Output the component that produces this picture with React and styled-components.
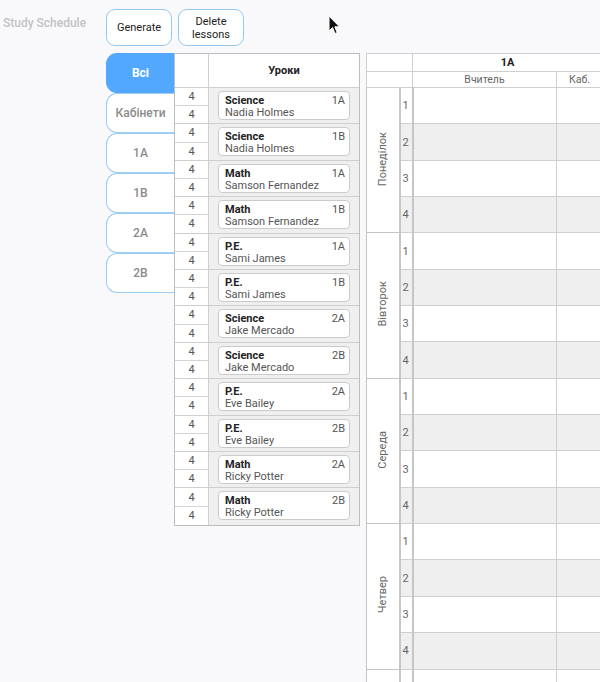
import React from "react";
import styled, { createGlobalStyle } from "styled-components";

const GlobalStyle = createGlobalStyle`
  html, body {
    margin: 0;
    padding: 0;
    background: #f9f9fb;
    font-family: Roboto, "Liberation Sans", sans-serif;
  }
`;

const lessons = [
  { subject: "Science", teacher: "Nadia Holmes", group: "1A" },
  { subject: "Science", teacher: "Nadia Holmes", group: "1B" },
  { subject: "Math", teacher: "Samson Fernandez", group: "1A" },
  { subject: "Math", teacher: "Samson Fernandez", group: "1B" },
  { subject: "P.E.", teacher: "Sami James", group: "1A" },
  { subject: "P.E.", teacher: "Sami James", group: "1B" },
  { subject: "Science", teacher: "Jake Mercado", group: "2A" },
  { subject: "Science", teacher: "Jake Mercado", group: "2B" },
  { subject: "P.E.", teacher: "Eve Bailey", group: "2A" },
  { subject: "P.E.", teacher: "Eve Bailey", group: "2B" },
  { subject: "Math", teacher: "Ricky Potter", group: "2A" },
  { subject: "Math", teacher: "Ricky Potter", group: "2B" },
];

const tabs = ["Всі", "Кабінети", "1A", "1B", "2A", "2B"];
const days = ["Понеділок", "Вівторок", "Середа", "Четвер", "П'ятниця"];

const Page = styled.div`
  position: relative;
  display: flex;
  width: 600px;
  height: 682px;
  overflow: hidden;
`;

const Brand = styled.div`
  flex: 0 0 103px;
  padding: 16px 0 0 3px;
  font-size: 12px;
  font-weight: 500;
  color: #c2c2c4;
`;

const Main = styled.div`
  display: flex;
  flex-direction: column;
  padding-top: 9px;
`;

const Toolbar = styled.div`
  display: flex;
  gap: 6px;
`;

const ActionButton = styled.button`
  width: 66px;
  height: 37px;
  padding: 0;
  background: #fff;
  border: 1px solid #92c8f2;
  border-radius: 9px;
  font-family: Roboto, "Liberation Sans", sans-serif;
  font-size: 11px;
  line-height: 13px;
  color: #222;
`;

const Workspace = styled.div`
  display: flex;
  align-items: flex-start;
  margin-top: 7px;
`;

const Tabs = styled.div`
  display: flex;
  flex-direction: column;
  width: 68px;
  flex-shrink: 0;
`;

const Tab = styled.div`
  display: flex;
  align-items: center;
  justify-content: center;
  height: 40px;
  box-sizing: border-box;
  border: 1px solid ${({ $active }) => ($active ? "#52a8ff" : "#9dcdf3")};
  border-right: none;
  border-radius: 11px 0 0 11px;
  background: ${({ $active }) => ($active ? "#52a8ff" : "#fff")};
  color: ${({ $active }) => ($active ? "#fff" : "#8c8c8c")};
  font-size: 12px;
  font-weight: ${({ $active }) => ($active ? 700 : 500)};
`;

const LessonsTable = styled.div`
  width: 186px;
  flex-shrink: 0;
  box-sizing: border-box;
  border: 1px solid #bdbdbd;
  background: #fff;
`;

const LessonsRow = styled.div`
  display: grid;
  grid-template-columns: 33px 1fr;
  height: ${({ $head }) => ($head ? "34px" : "36.4px")};
  box-sizing: border-box;
  border-bottom: 1px solid #cfcfcf;
  &:last-child {
    border-bottom: none;
  }
`;

const HeadCell = styled.div`
  display: flex;
  align-items: center;
  justify-content: center;
  border-left: ${({ $first }) => ($first ? "none" : "1px solid #cfcfcf")};
  font-size: 11px;
  font-weight: 700;
  color: #222;
`;

const Counts = styled.div`
  display: flex;
  flex-direction: column;
`;

const Count = styled.div`
  flex: 1;
  display: flex;
  align-items: center;
  justify-content: center;
  font-size: 11px;
  color: #555;
  & + & {
    border-top: 1px solid #d4d4d4;
  }
`;

const LessonSlot = styled.div`
  border-left: 1px solid #cfcfcf;
  background: #efefef;
  padding: 3px 9px 0 9px;
`;

const Card = styled.div`
  display: grid;
  grid-template-columns: 1fr auto;
  height: 29px;
  box-sizing: border-box;
  padding: 3px 4px 0 6px;
  background: #fff;
  border: 1px solid #cbcbcb;
  border-radius: 4px;
  font-size: 11px;
  line-height: 12px;
`;

const Subject = styled.span`
  font-weight: 700;
  color: #222;
`;

const Group = styled.span`
  color: #555;
  text-align: right;
`;

const Teacher = styled.span`
  grid-column: 1 / 3;
  color: #555;
`;

const Schedule = styled.table`
  margin-left: 6px;
  flex-shrink: 0;
  border-collapse: collapse;
  table-layout: fixed;
  background: #fff;
  border: 1px solid #bdbdbd;
  font-size: 11px;
  color: #555;
`;

const Th = styled.th`
  height: ${({ $h }) => $h}px;
  padding: 0;
  border: 1px solid #cfcfcf;
  font-weight: ${({ $bold }) => ($bold ? 700 : 400)};
  color: ${({ $bold }) => ($bold ? "#222" : "#666")};
  font-size: ${({ $bold }) => ($bold ? "11px" : "10.5px")};
`;

const DayCell = styled.td`
  padding: 0;
  border: 1px solid #c4c4c4;
  text-align: center;
  vertical-align: middle;
`;

const DayLabel = styled.span`
  display: inline-block;
  writing-mode: vertical-rl;
  transform: rotate(180deg);
  font-size: 11px;
  color: #666;
`;

const NumCell = styled.td`
  height: 36.35px;
  padding: 0 0 0 2px;
  box-sizing: border-box;
  border-top: 1px solid #cfcfcf;
  border-bottom: 1px solid #cfcfcf;
  border-left: 2px solid #c6c6c6;
  border-right: 2px solid #c6c6c6;
  background: ${({ $odd }) => ($odd ? "#efefef" : "#fff")};
  font-size: 11px;
  color: #666;
`;

const SlotCell = styled.td`
  padding: 0;
  border: 1px solid #cfcfcf;
  background: ${({ $odd }) => ($odd ? "#efefef" : "#fff")};
`;

const Cursor = styled.svg`
  position: absolute;
  left: 328px;
  top: 15px;
`;

export default function App() {
  return (
    <Page>
      <GlobalStyle />
      <Brand>Study Schedule</Brand>
      <Main>
        <Toolbar>
          <ActionButton>Generate</ActionButton>
          <ActionButton>
            Delete
            <br />
            lessons
          </ActionButton>
        </Toolbar>
        <Workspace>
          <Tabs>
            {tabs.map((t, i) => (
              <Tab key={t} $active={i === 0}>
                {t}
              </Tab>
            ))}
          </Tabs>
          <LessonsTable>
            <LessonsRow $head>
              <HeadCell $first />
              <HeadCell>Уроки</HeadCell>
            </LessonsRow>
            {lessons.map((l, i) => (
              <LessonsRow key={i}>
                <Counts>
                  <Count>4</Count>
                  <Count>4</Count>
                </Counts>
                <LessonSlot>
                  <Card>
                    <Subject>{l.subject}</Subject>
                    <Group>{l.group}</Group>
                    <Teacher>{l.teacher}</Teacher>
                  </Card>
                </LessonSlot>
              </LessonsRow>
            ))}
          </LessonsTable>
          <Schedule>
            <colgroup>
              <col style={{ width: 33 }} />
              <col style={{ width: 13 }} />
              <col style={{ width: 144 }} />
              <col style={{ width: 46 }} />
            </colgroup>
            <thead>
              <tr>
                <Th $h={17} colSpan={2} />
                <Th $h={17} colSpan={2} $bold>
                  1A
                </Th>
              </tr>
              <tr>
                <Th $h={15} colSpan={2} />
                <Th $h={15}>Вчитель</Th>
                <Th $h={15}>Каб.</Th>
              </tr>
            </thead>
            <tbody>
              {days.map((d) =>
                [1, 2, 3, 4].map((n) => (
                  <tr key={d + n}>
                    {n === 1 && (
                      <DayCell rowSpan={4}>
                        <DayLabel>{d}</DayLabel>
                      </DayCell>
                    )}
                    <NumCell $odd={n % 2 === 0}>{n}</NumCell>
                    <SlotCell $odd={n % 2 === 0} />
                    <SlotCell $odd={n % 2 === 0} />
                  </tr>
                ))
              )}
            </tbody>
          </Schedule>
        </Workspace>
      </Main>
      <Cursor width="13" height="20" viewBox="0 0 13 20">
        <path
          d="M1 1 L1 16 L4.5 12.5 L7 18.5 L9.2 17.6 L6.8 11.8 L11.5 11.8 Z"
          fill="#111"
          stroke="#fff"
          strokeWidth="1"
          strokeLinejoin="round"
        />
      </Cursor>
    </Page>
  );
}
